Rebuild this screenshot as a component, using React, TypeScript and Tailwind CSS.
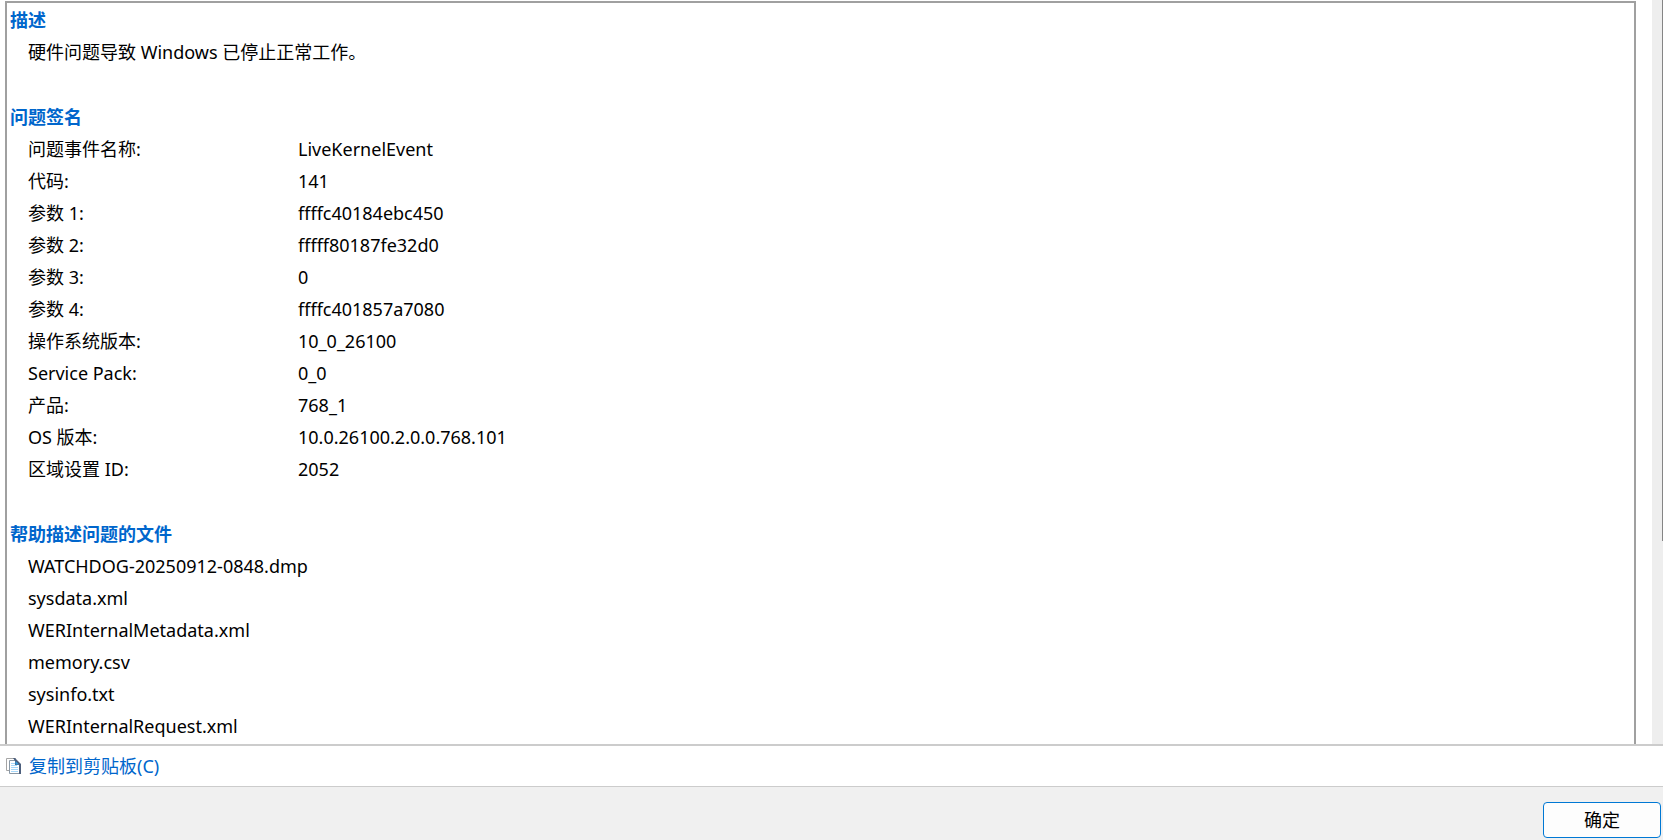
const signature = [
  { name: "问题事件名称:", value: "LiveKernelEvent" },
  { name: "代码:", value: "141" },
  { name: "参数 1:", value: "ffffc40184ebc450" },
  { name: "参数 2:", value: "fffff80187fe32d0" },
  { name: "参数 3:", value: "0" },
  { name: "参数 4:", value: "ffffc401857a7080" },
  { name: "操作系统版本:", value: "10_0_26100" },
  { name: "Service Pack:", value: "0_0" },
  { name: "产品:", value: "768_1" },
  { name: "OS 版本:", value: "10.0.26100.2.0.0.768.101" },
  { name: "区域设置 ID:", value: "2052" },
];

const files = [
  "WATCHDOG-20250912-0848.dmp",
  "sysdata.xml",
  "WERInternalMetadata.xml",
  "memory.csv",
  "sysinfo.txt",
  "WERInternalRequest.xml",
];

function Heading({ children }: { children: string }) {
  return <h2 className="pl-[3px] pt-px font-bold leading-8 text-[#0066cc]">{children}</h2>;
}

function CopyIcon() {
  return (
    <svg width="16" height="18" viewBox="0 0 16 18" aria-hidden="true">
      <path d="M0.5 1.5h9v12h-9z" fill="#fff" stroke="#a5a5a5" />
      <path d="M3.5 3.5h6l4 4v9h-10z" fill="#fff" stroke="#8a98a5" />
      <path d="M5 6.5h4M5 8.5h6M5 10.5h7M5 12.5h7M5 14.5h7" stroke="#a6d8fb" />
      <path d="M7 1h2l6 6v10h-2V8H9V4z" fill="#4d5f7d" />
      <path d="M9.5 4l3.5 3.5H9.5z" fill="#2f9be0" />
    </svg>
  );
}

export default function App() {
  return (
    <div className="flex h-screen flex-col bg-white font-['Noto_Sans','Noto_Sans_CJK_SC',sans-serif] text-[18px] text-black">
      <div className="flex min-h-0 flex-1 border-b-2 border-[#cccccc]">
        <main className="mr-4 ml-[5px] mt-px flex-1 overflow-hidden border-2 border-b-0 border-[#a0a0a0]">
          <section className="pb-8">
            <Heading>描述</Heading>
            <p className="pl-[21px] leading-8">硬件问题导致 Windows 已停止正常工作。</p>
          </section>
          <section className="pb-8">
            <Heading>问题签名</Heading>
            <table className="w-full table-fixed border-collapse leading-8">
              <tbody>
                {signature.map((row) => (
                  <tr key={row.name}>
                    <th scope="row" className="w-[291px] p-0 pl-[21px] text-left font-normal">
                      {row.name}
                    </th>
                    <td className="p-0">{row.value}</td>
                  </tr>
                ))}
              </tbody>
            </table>
          </section>
          <section>
            <Heading>帮助描述问题的文件</Heading>
            <ul className="pl-[21px] leading-8">
              {files.map((file) => (
                <li key={file}>{file}</li>
              ))}
            </ul>
          </section>
        </main>
        <div className="flex w-[11px] justify-end bg-[#eeeeee]">
          <div className="h-[541px] w-px bg-[#858585]" />
        </div>
      </div>
      <div className="flex h-10 items-center pl-[6px]">
        <a href="#copy" className="flex items-center gap-[7px] text-[#0066cc]">
          <CopyIcon />
          复制到剪贴板(C)
        </a>
      </div>
      <footer className="flex h-[54px] items-end justify-end border-t border-[#cccccc] bg-[#f0f0f0] px-[2px] pb-[2px]">
        <button
          type="button"
          className="h-9 w-[118px] rounded border border-[#0078d4] bg-[#fdfdfd] leading-8"
        >
          确定
        </button>
      </footer>
    </div>
  );
}
